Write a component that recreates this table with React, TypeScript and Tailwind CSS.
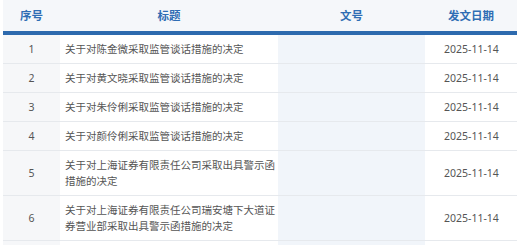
import React from "react";

const rows: { n: number; title: string; date: string }[] = [
  { n: 1, title: "关于对陈金微采取监管谈话措施的决定", date: "2025-11-14" },
  { n: 2, title: "关于对黄文晓采取监管谈话措施的决定", date: "2025-11-14" },
  { n: 3, title: "关于对朱伶俐采取监管谈话措施的决定", date: "2025-11-14" },
  { n: 4, title: "关于对颜伶俐采取监管谈话措施的决定", date: "2025-11-14" },
  { n: 5, title: "关于对上海证券有限责任公司采取出具警示函措施的决定", date: "2025-11-14" },
  { n: 6, title: "关于对上海证券有限责任公司瑞安塘下大道证券营业部采取出具警示函措施的决定", date: "2025-11-14" },
];

export default function App() {
  return (
    <div
      className="h-[245px] w-[520px] overflow-hidden bg-white px-[3px]"
      style={{ fontFamily: '"Noto Sans", "Noto Sans CJK SC", sans-serif' }}
    >
      <table className="w-[514px] table-fixed border-collapse">
        <colgroup>
          <col className="w-[57px]" />
          <col className="w-[218px]" />
          <col className="w-[147px]" />
          <col className="w-[92px]" />
        </colgroup>
        <thead>
          <tr className="h-[31px] bg-[#f5f7fa] text-[11.5px] font-bold text-[#2f6db4]">
            <th className="p-0 text-center font-bold">序号</th>
            <th className="p-0 text-center font-bold">标题</th>
            <th className="p-0 text-center font-bold">文号</th>
            <th className="p-0 text-center font-bold">发文日期</th>
          </tr>
          <tr>
            <td colSpan={4} className="h-[4px] bg-[#2d6aae] p-0"></td>
          </tr>
        </thead>
        <tbody className="text-[10.5px] leading-[16px] text-[#555]">
          {rows.map((r) => (
            <tr key={r.n} className="border-b border-[#e6e9ed]">
              <td className="bg-[#f6f7f9] py-[6px] text-center align-middle">{r.n}</td>
              <td className="bg-white py-[6px] pl-[5px] pr-0 align-middle">{r.title}</td>
              <td className="bg-[#f1f5fa] py-[6px] align-middle"></td>
              <td className="bg-white py-[6px] pl-[19px] align-middle text-left">{r.date}</td>
            </tr>
          ))}
          <tr className="h-[28px]">
            <td className="bg-[#f6f7f9] p-0"></td>
            <td className="bg-white p-0"></td>
            <td className="bg-[#f1f5fa] p-0"></td>
            <td className="bg-white p-0"></td>
          </tr>
        </tbody>
      </table>
    </div>
  );
}
